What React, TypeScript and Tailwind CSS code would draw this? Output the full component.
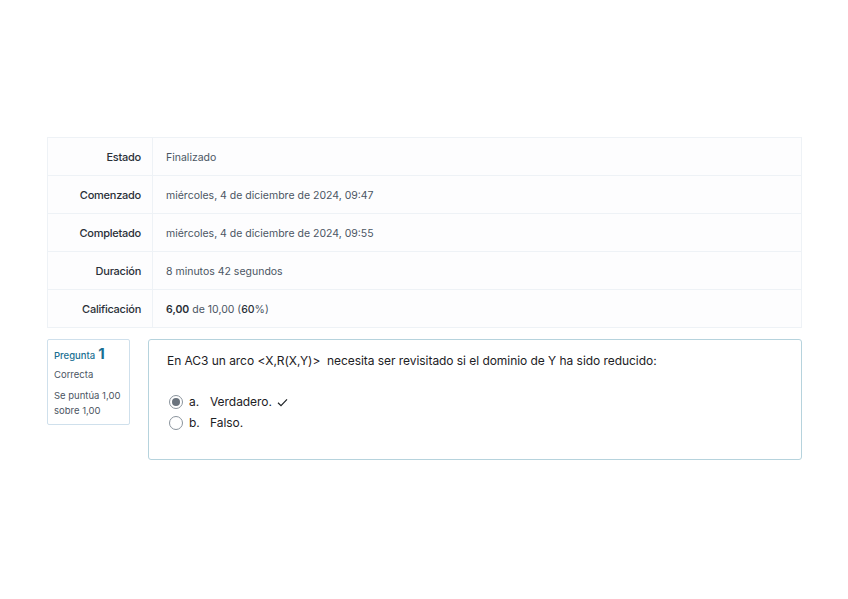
import React from 'react'

const rows: {label: string; value: React.ReactNode}[] = [
  {label: 'Estado', value: 'Finalizado'},
  {label: 'Comenzado', value: 'miércoles, 4 de diciembre de 2024, 09:47'},
  {label: 'Completado', value: 'miércoles, 4 de diciembre de 2024, 09:55'},
  {label: 'Duración', value: '8 minutos 42 segundos'},
  {
    label: 'Calificación',
    value: (
      <>
        <span className="font-semibold text-[#2a3038]">6,00</span> de 10,00 (<span className="font-medium text-[#2a3038]">60</span>%)
      </>
    ),
  },
]

function Radio({checked}: {checked?: boolean}) {
  return (
    <span className="flex h-[14px] w-[14px] items-center justify-center rounded-full border border-[#8a939c] bg-white">
      {checked && <span className="h-[8px] w-[8px] rounded-full bg-[#6a737d]" />}
    </span>
  )
}

export default function App() {
  return (
    <div className="min-h-[599px] w-[848px] bg-white pl-[47px] pr-[46px] pt-[137px] font-['Inter',sans-serif] text-[#1d2125]">
      {/* resumen del intento */}
      <div className="border-x border-t border-[#eef2f6] bg-[#fdfdfe]">
        {rows.map((r) => (
          <div key={r.label} className="flex h-[38px] items-stretch border-b border-[#eef2f6] text-[11px]">
            <div className="flex w-[105px] items-center justify-end border-r border-[#eef2f6] pr-[11px] pt-[2px] font-medium tracking-[-0.25px] text-[#2a3038]">
              {r.label}
            </div>
            <div className="flex items-center pl-[13px] pt-[3px] text-[10.5px] text-[#4b5563]">
              <span>{r.value}</span>
            </div>
          </div>
        ))}
      </div>

      {/* pregunta */}
      <div className="mt-[11px] flex items-start gap-[18px]">
        <div className="h-[86px] w-[83px] rounded-[2px] border border-[#cfe0ec] bg-white px-[6px] pt-[5px] text-[9.5px] leading-[14px] text-[#4b5563]">
          <div className="flex items-baseline gap-[3px]">
            <span className="font-medium text-[#1a6f92]">Pregunta</span>
            <span className="text-[15px] font-bold leading-[18px] text-[#1a6f92]">1</span>
          </div>
          <div className="mt-[5px]">Correcta</div>
          <div className="mt-[6px] leading-[15px]">
            Se puntúa 1,00
            <br />
            sobre 1,00
          </div>
        </div>

        <div className="h-[121px] flex-1 rounded-[3px] border border-[#b6d3dd] bg-white pl-[18px] pt-[12px] text-[12px] tracking-[-0.05px]">
          <p className="whitespace-pre">En AC3 un arco &lt;X,R(X,Y)&gt;  necesita ser revisitado si el dominio de Y ha sido reducido:</p>
          <div className="mt-[24px] flex flex-col gap-[5px]">
            <div className="flex h-[16px] items-center">
              <span className="ml-[2px]">
                <Radio checked />
              </span>
              <span className="ml-[6px] w-[21px]">a.</span>
              <span>Verdadero.</span>
              <svg className="ml-[5px]" width="11" height="9" viewBox="0 0 11 9" fill="none">
                <path d="M1 4.8 L4 7.6 L10 1.4" stroke="#1d2125" strokeWidth="1.2" />
              </svg>
            </div>
            <div className="flex h-[16px] items-center">
              <span className="ml-[2px]">
                <Radio />
              </span>
              <span className="ml-[6px] w-[21px]">b.</span>
              <span>Falso.</span>
            </div>
          </div>
        </div>
      </div>
    </div>
  )
}
